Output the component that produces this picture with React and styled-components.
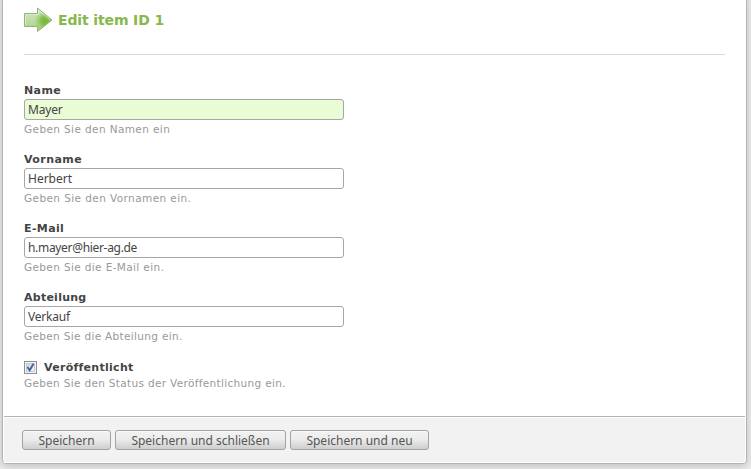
import React from "react";
import styled, { createGlobalStyle } from "styled-components";

const GlobalStyle = createGlobalStyle`
  * { box-sizing: border-box; }
  html, body { margin: 0; height: 469px; overflow: hidden; background: #ececec; }
  body { font-family: "DejaVu Sans", Verdana, sans-serif; color: #444; }
`;

const Page = styled.div`
  width: 751px;
  height: 469px;
  padding: 0 4px 0 2px;
  overflow: hidden;
  background: #ececec;
`;

const Panel = styled.main`
  display: flex;
  flex-direction: column;
  width: 745px;
  height: 474px;
  margin-top: -10px;
  padding: 10px 1px 0;
  border: 1px solid #b4b4b4;
  border-radius: 4px;
  background: #fff;
  box-shadow: 0 2px 8px rgba(0, 0, 0, 0.2);
`;

const Header = styled.header`
  display: flex;
  align-items: flex-start;
  height: 55px;
  margin: -1px 20px 0;
  padding-top: 7px;
  border-bottom: 1px solid #dadada;
`;

const ArrowIcon = styled.svg`
  display: block;
  width: 29px;
  height: 26px;
`;

const Title = styled.h1`
  margin: 4px 0 0 5px;
  font-size: 14px;
  line-height: 18px;
  font-weight: bold;
  letter-spacing: -0.13px;
  color: #86b84c;
  white-space: nowrap;
`;

const Form = styled.form`
  flex: 1;
  padding: 28px 20px 0;
`;

const Field = styled.div`
  height: 69px;
`;

const Label = styled.label`
  display: block;
  height: 16px;
  font-size: 11px;
  line-height: 15px;
  font-weight: bold;
  letter-spacing: ${(p) => p.$spacing || 0}px;
  white-space: nowrap;
`;

const Input = styled.input`
  display: block;
  width: 320px;
  height: 21px;
  padding: 0 3px 1px;
  border: 1px solid #a6a6a6;
  border-radius: 3px;
  outline: none;
  background: ${(p) => (p.$active ? "#e9fcd5" : "#fff")};
  color: #444;
  font: 12px "Noto Sans", sans-serif;
  letter-spacing: ${(p) => p.$spacing || 0}px;
`;

const Hint = styled.p`
  margin: 2px 0 0;
  font-size: 10.5px;
  line-height: 14px;
  letter-spacing: ${(p) => p.$spacing}px;
  color: #999;
  white-space: nowrap;
`;

const CheckRow = styled.div`
  display: flex;
  align-items: flex-start;
  height: 15px;
  gap: 7px;

  ${Label} {
    margin-top: 1px;
  }
`;

const CheckIcon = styled.svg`
  display: block;
  width: 13px;
  height: 13px;
  margin-top: 2px;
`;

const Footer = styled.footer`
  display: flex;
  gap: 4px;
  height: 46px;
  padding: 12px 18px 0;
  border: solid #fff;
  border-width: 1px 0;
  background: #f2f2f2;
  box-shadow: 0 -1px #b4b4b4;
`;

const Button = styled.button`
  width: ${(p) => p.$width}px;
  height: 20px;
  padding: 1px 0 0;
  border: 1px solid #a3a3a3;
  border-radius: 3px;
  background: linear-gradient(#f2f2f2, #ececec 45%, #cecece);
  box-shadow: inset 0 1px #fafafa;
  color: #555;
  font: 12px/16px "Noto Sans", sans-serif;
  white-space: nowrap;
`;

const fields = [
  { id: "name", label: "Name", labelGap: 0.4, value: "Mayer", valueGap: -0.2, hint: "Geben Sie den Namen ein", hintGap: 0.39, active: true },
  { id: "vorname", label: "Vorname", labelGap: 0.42, value: "Herbert", valueGap: 0, hint: "Geben Sie den Vornamen ein.", hintGap: 0.41 },
  { id: "email", label: "E-Mail", labelGap: 0.38, value: "h.mayer@hier-ag.de", valueGap: -0.32, hint: "Geben Sie die E-Mail ein.", hintGap: 0.37 },
  { id: "abteilung", label: "Abteilung", labelGap: 0.25, value: "Verkauf", valueGap: -0.2, hint: "Geben Sie die Abteilung ein.", hintGap: 0.33 },
];

function Arrow() {
  return (
    <ArrowIcon viewBox="0 0 29 26" aria-hidden="true">
      <defs>
        <linearGradient id="arrowBase" x1="0" y1="0" x2="0" y2="1">
          <stop offset="0" stopColor="#d5e8c6" />
          <stop offset="1" stopColor="#a9d088" />
        </linearGradient>
        <radialGradient id="arrowGlow" cx="21" cy="14" r="11" gradientUnits="userSpaceOnUse">
          <stop offset="0" stopColor="#73b62d" />
          <stop offset="0.4" stopColor="#80bd43" stopOpacity="0.85" />
          <stop offset="1" stopColor="#9bcb70" stopOpacity="0" />
        </radialGradient>
      </defs>
      <path d="M.5 6.500H13.500V1L28 13L13.500 24.500V19.500H.5Z" fill="url(#arrowBase)" />
      <path d="M.5 6.500H13.500V1L28 13L13.500 24.500V19.500H.5Z" fill="url(#arrowGlow)" stroke="#8fb578" />
      <path d="M1.500 18V7.500H14.500V3L26 12.500" fill="none" stroke="#e4f1da" strokeOpacity="0.7" />
    </ArrowIcon>
  );
}

function Check() {
  return (
    <CheckIcon viewBox="0 0 13 13" role="checkbox" aria-checked="true">
      <defs>
        <linearGradient id="checkBack" x1="0" y1="0" x2="1" y2="1">
          <stop offset="0" stopColor="#cdd2d9" />
          <stop offset="1" stopColor="#f8f8f8" />
        </linearGradient>
      </defs>
      <rect x=".5" y=".5" width="12" height="12" fill="#f4f4f4" stroke="#8e8f8f" />
      <rect x="2.500" y="2.500" width="8" height="8" fill="url(#checkBack)" stroke="#c6cad0" />
      <path d="M3.500 6L5.700 9.300L9.500 2.800" fill="none" stroke="#4560a0" strokeWidth="1.900" />
    </CheckIcon>
  );
}

export default function App() {
  return (
    <Page>
      <GlobalStyle />
      <Panel>
        <Header>
          <Arrow />
          <Title>Edit item ID 1</Title>
        </Header>
        <Form>
          {fields.map((f) => (
            <Field key={f.id}>
              <Label htmlFor={f.id} $spacing={f.labelGap}>{f.label}</Label>
              <Input id={f.id} defaultValue={f.value} $active={f.active} $spacing={f.valueGap} />
              <Hint $spacing={f.hintGap}>{f.hint}</Hint>
            </Field>
          ))}
          <CheckRow>
            <Check />
            <Label $spacing={0.28}>Veröffentlicht</Label>
          </CheckRow>
          <Hint $spacing={0.33}>Geben Sie den Status der Veröffentlichung ein.</Hint>
        </Form>
        <Footer>
          <Button $width={89}>Speichern</Button>
          <Button $width={171}>Speichern und schließen</Button>
          <Button $width={139}>Speichern und neu</Button>
        </Footer>
      </Panel>
    </Page>
  );
}
